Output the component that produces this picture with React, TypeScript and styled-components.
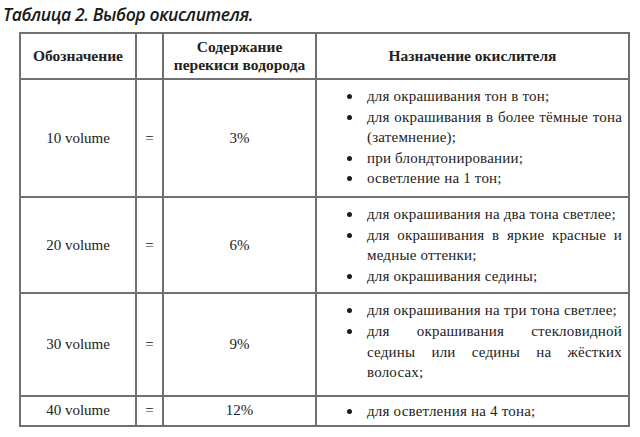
import styled, { createGlobalStyle } from 'styled-components';

const GlobalStyle = createGlobalStyle`
  html, body {
    margin: 0;
    padding: 0;
    background: #ffffff;
  }
  body {
    width: 640px;
    height: 437px;
    overflow: hidden;
  }
`;

const Page = styled.div`
  display: flex;
  flex-direction: column;
  padding: 1px 0 0 3px;
  color: #1e1e1e;
`;

const Caption = styled.h1`
  margin: 0 0 5px 0;
  font-family: 'Open Sans', sans-serif;
  font-style: italic;
  font-weight: 600;
  font-size: 17.6px;
  line-height: 26px;
  letter-spacing: -0.4px;
  color: #1a1a1a;
`;

const Table = styled.table`
  margin-left: 16px;
  width: 609px;
  border-collapse: collapse;
  table-layout: fixed;
  font-family: 'Liberation Serif', 'Times New Roman', serif;
  font-size: 15px;
  color: #222;
`;

const Row = styled.tr<{ $h: number }>`
  height: ${p => p.$h}px;
`;

const Head = styled.th`
  border: 2px solid #707070;
  font-family: 'Liberation Serif', 'Times New Roman', serif;
  font-weight: 700;
  font-size: 15.5px;
  line-height: 18px;
  text-align: center;
  vertical-align: middle;
  padding: 0 2px;
`;

const Cell = styled.td`
  border: 2px solid #707070;
  font-family: 'Liberation Serif', 'Times New Roman', serif;
  font-size: 15px;
  text-align: center;
  vertical-align: middle;
  padding: 0;
`;

const NoteCell = styled.td<{ $pt?: number; $pb?: number }>`
  border: 2px solid #707070;
  font-family: 'Liberation Serif', 'Times New Roman', serif;
  font-size: 15px;
  letter-spacing: 0.2px;
  vertical-align: top;
  padding: ${p => p.$pt ?? 6}px 6px ${p => p.$pb ?? 6}px 30px;
`;

const List = styled.ul`
  margin: 0;
  padding: 0;
  list-style: none;
`;

const Item = styled.li`
  display: flex;
  line-height: 20.6px;
`;

const Dot = styled.span`
  flex: 0 0 20px;
  &::before {
    content: '';
    display: inline-block;
    width: 5px;
    height: 5px;
    border-radius: 50%;
    background: #1e1e1e;
    vertical-align: middle;
    margin-bottom: 2px;
  }
`;

const ItemText = styled.span`
  flex: 1;
  text-align: justify;
`;

const rows = [
  {
    name: '10 volume',
    pct: '3%',
    h: 118,
    notes: [
      'для окрашивания тон в тон;',
      'для окрашивания в более тёмные тона (затемнение);',
      'при блондтонировании;',
      'осветление на 1 тон;'
    ]
  },
  {
    name: '20 volume',
    pct: '6%',
    h: 95,
    notes: [
      'для окрашивания на два тона светлее;',
      'для окрашивания в яркие красные и медные оттенки;',
      'для окрашивания седины;'
    ]
  },
  {
    name: '30 volume',
    pct: '9%',
    h: 101,
    pb: 12,
    notes: [
      'для окрашивания на три тона светлее;',
      'для окрашивания стекловидной седины или седины на жёстких волосах;'
    ]
  },
  {
    name: '40 volume',
    pct: '12%',
    h: 30,
    pt: 4,
    pb: 3,
    notes: ['для осветления на 4 тона;']
  }
];

export default function App() {
  return (
    <Page>
      <GlobalStyle />
      <Caption>Таблица 2. Выбор окислителя.</Caption>
      <Table>
        <colgroup>
          <col style={{ width: 116 }} />
          <col style={{ width: 27 }} />
          <col style={{ width: 153 }} />
          <col style={{ width: 313 }} />
        </colgroup>
        <thead>
          <Row $h={46}>
            <Head>Обозначение</Head>
            <Head />
            <Head>
              Содержание
              <br />
              перекиси водорода
            </Head>
            <Head>Назначение окислителя</Head>
          </Row>
        </thead>
        <tbody>
          {rows.map(r => (
            <Row $h={r.h} key={r.name}>
              <Cell>{r.name}</Cell>
              <Cell>=</Cell>
              <Cell>{r.pct}</Cell>
              <NoteCell $pt={r.pt} $pb={r.pb}>
                <List>
                  {r.notes.map(n => (
                    <Item key={n}>
                      <Dot />
                      <ItemText>{n}</ItemText>
                    </Item>
                  ))}
                </List>
              </NoteCell>
            </Row>
          ))}
        </tbody>
      </Table>
    </Page>
  );
}
